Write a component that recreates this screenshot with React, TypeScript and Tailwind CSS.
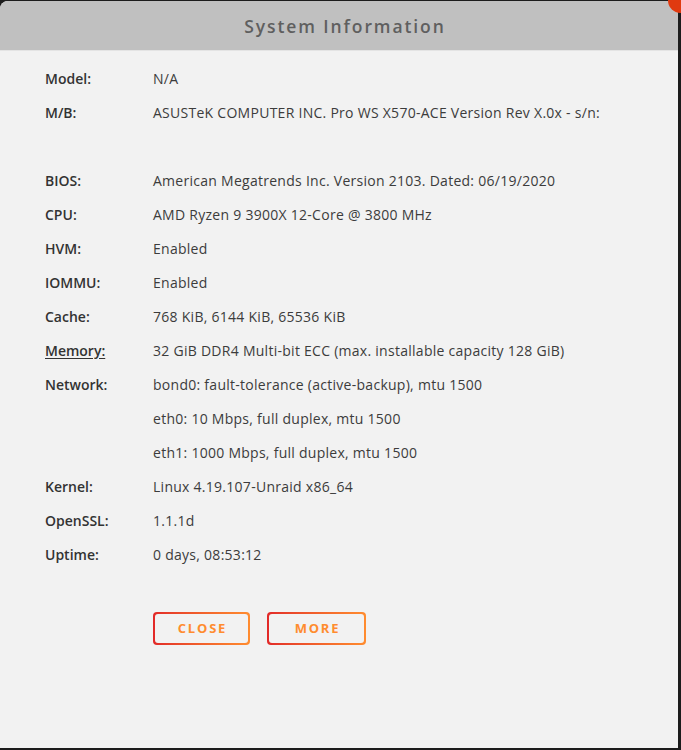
import React from "react";

const rows: { label: string; value: string; link?: boolean }[] = [
  { label: "Model:", value: "N/A" },
  { label: "M/B:", value: "ASUSTeK COMPUTER INC. Pro WS X570-ACE Version Rev X.0x - s/n:" },
  { label: "", value: "" },
  { label: "BIOS:", value: "American Megatrends Inc. Version 2103. Dated: 06/19/2020" },
  { label: "CPU:", value: "AMD Ryzen 9 3900X 12-Core @ 3800 MHz" },
  { label: "HVM:", value: "Enabled" },
  { label: "IOMMU:", value: "Enabled" },
  { label: "Cache:", value: "768 KiB, 6144 KiB, 65536 KiB" },
  { label: "Memory:", value: "32 GiB DDR4 Multi-bit ECC (max. installable capacity 128 GiB)", link: true },
  { label: "Network:", value: "bond0: fault-tolerance (active-backup), mtu 1500" },
  { label: "", value: "eth0: 10 Mbps, full duplex, mtu 1500" },
  { label: "", value: "eth1: 1000 Mbps, full duplex, mtu 1500" },
  { label: "Kernel:", value: "Linux 4.19.107-Unraid x86_64" },
  { label: "OpenSSL:", value: "1.1.1d" },
  { label: "Uptime:", value: "0 days, 08:53:12" },
];

const GradientButton = ({ label, width }: { label: string; width: string }) => (
  <button className={`rounded-[4px] bg-gradient-to-r from-[#e22828] to-[#ff8c2f] p-[2px] ${width}`}>
    <span className="flex h-[29px] items-center justify-center rounded-[3px] bg-[#f2f2f2]">
      <span className="pl-[2px] text-[13px] font-bold tracking-[1.8px] text-[#ff8c2f]">
        {label}
      </span>
    </span>
  </button>
);

export default function App() {
  return (
    <div
      className="relative h-[750px] w-[681px] overflow-hidden bg-[#1c1c1c]"
      style={{ fontFamily: '"Open Sans", "Liberation Sans", sans-serif' }}
    >
      {/* dialog */}
      <div className="mt-[1px] flex h-[747px] w-[678px] flex-col overflow-hidden rounded-tl-[8px] bg-[#f2f2f2]">
        <div className="flex h-[50px] shrink-0 items-center justify-center border-b border-[#e4e4e4] bg-[#c0c0c0] pt-[2px]">
          <h2 className="pl-[12px] text-[17.5px] font-semibold tracking-[1.9px] text-[#5f5f5f]">
            System Information
          </h2>
        </div>

        <div className="pl-[45px] pt-[10px]">
          {rows.map((r, i) => (
            <div key={i} className="flex h-[34px] items-center text-[14px]">
              <span
                className={`w-[108px] shrink-0 font-semibold text-[#333] ${r.link ? "underline underline-offset-2" : ""}`}
              >
                {r.label}
              </span>
              <span className="tracking-[0.27px] text-[#3c3c3c]">{r.value}</span>
            </div>
          ))}

          <div className="ml-[108px] mt-[41px] flex gap-[17px]">
            <GradientButton label="CLOSE" width="w-[97px]" />
            <GradientButton label="MORE" width="w-[99px]" />
          </div>
        </div>
      </div>

      {/* close badge in the corner */}
      <div className="absolute right-[-12px] top-[-12px] h-[25px] w-[25px] rounded-full bg-[#e03a10]" />
    </div>
  );
}
